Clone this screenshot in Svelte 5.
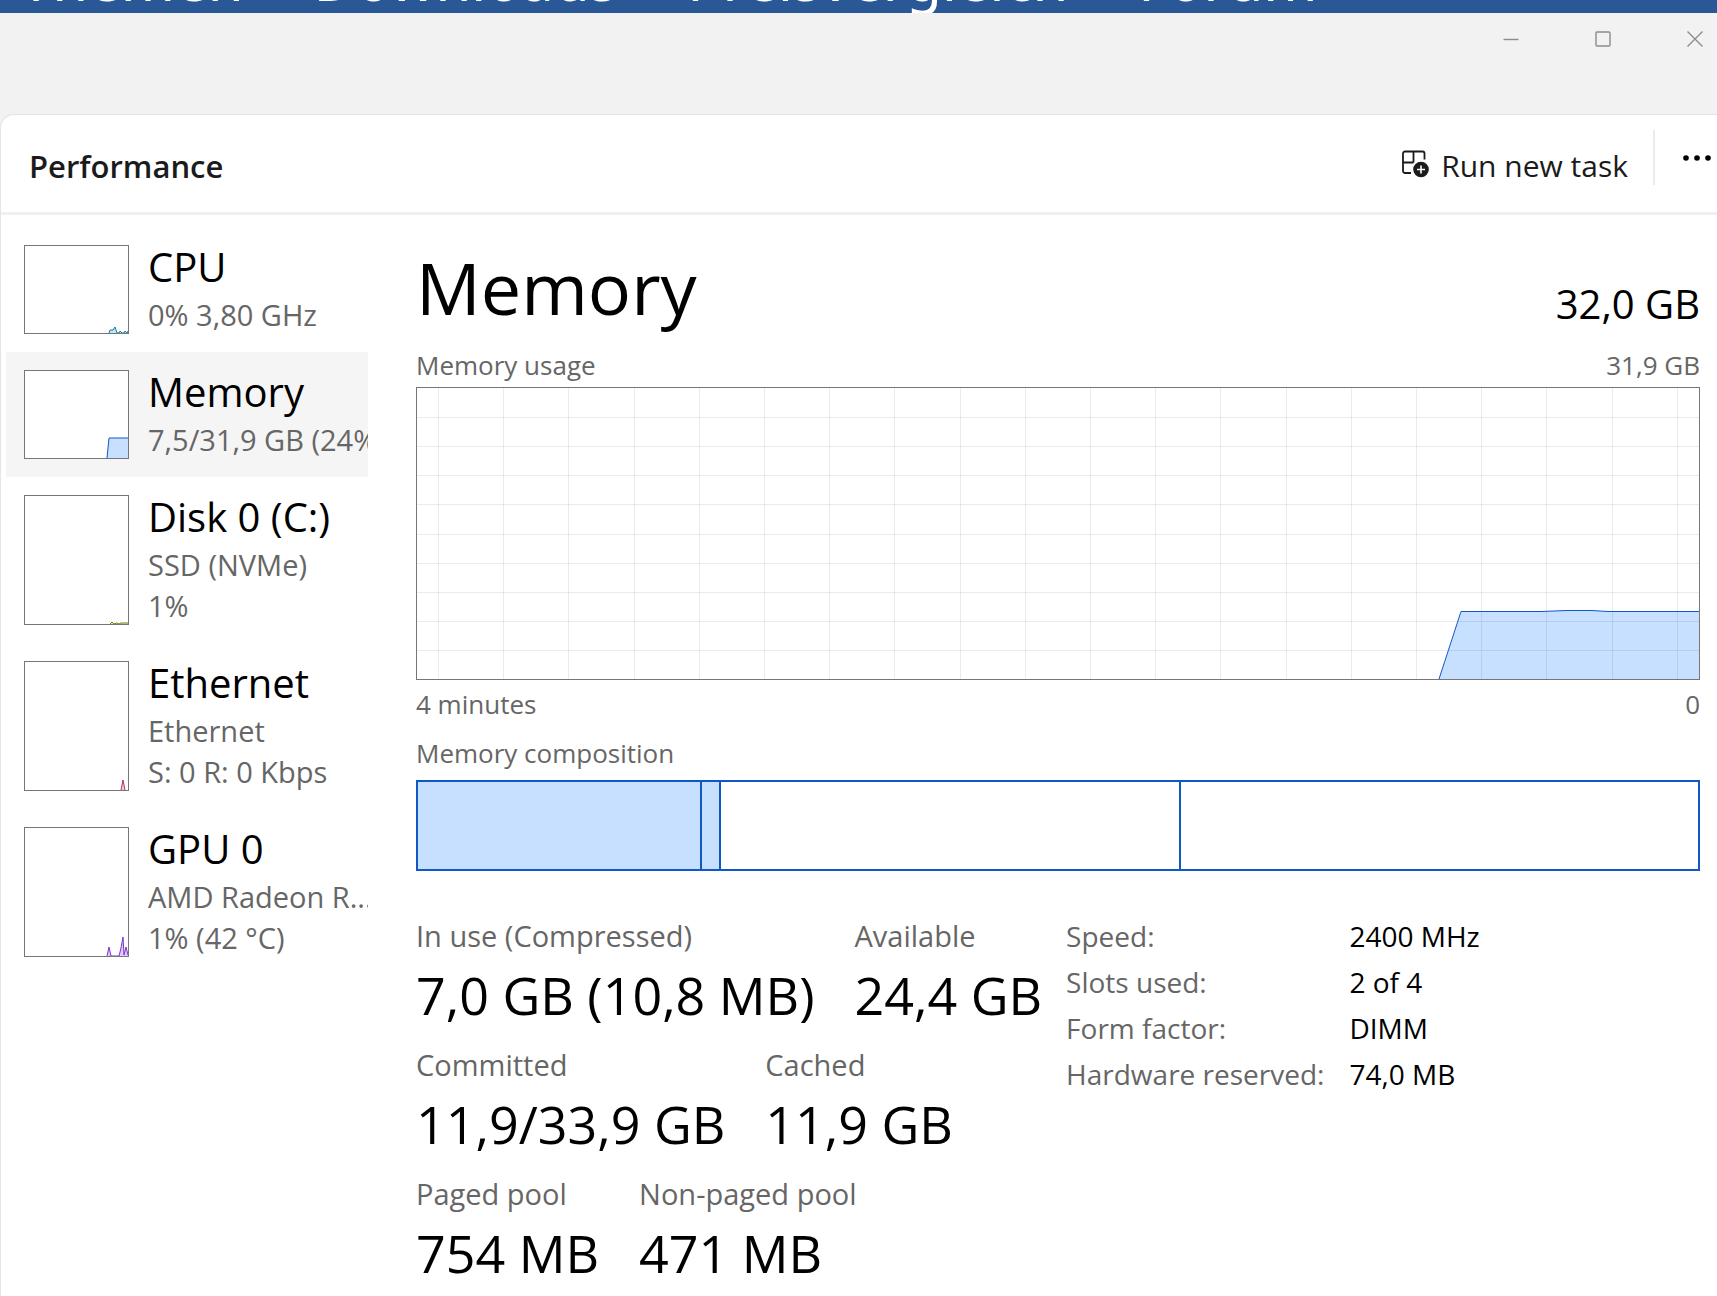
<script lang="ts">
  // Task Manager, Performance tab with the memory page open

  interface Device {
    id: string;
    name: string;
    lines: string[];
    color: string;
    fill: string;
    // graph points, measured from the bottom right corner of the thumbnail
    points: [number, number][];
  }

  const siteLinks = ['Themen', 'Downloads', 'Preisvergleich', 'Forum'];

  const devices: Device[] = [
    {
      id: 'cpu',
      name: 'CPU',
      lines: ['0% 3,80 GHz'],
      color: '#117d9b',
      fill: '#c3e7f1',
      points: [[19, 0], [18, 3], [15, 3], [13, 6], [12, 3], [11, 0], [9, 0], [8, 2], [6, 0], [4, 0], [3, 2], [1, 0], [0, 2]],
    },
    {
      id: 'memory',
      name: 'Memory',
      lines: ['7,5/31,9 GB (24%)'],
      color: '#1158c7',
      fill: '#c7e0ff',
      points: [[21, 0], [19, 20], [0, 20]],
    },
    {
      id: 'disk',
      name: 'Disk 0 (C:)',
      lines: ['SSD (NVMe)', '1%'],
      color: '#77801a',
      fill: '#e3e6bd',
      points: [[18, 0], [16, 2], [14, 0], [11, 1], [9, 0], [7, 1], [0, 1]],
    },
    {
      id: 'ethernet',
      name: 'Ethernet',
      lines: ['Ethernet', 'S: 0 R: 0 Kbps'],
      color: '#b5335c',
      fill: '#f2c9d6',
      points: [[7, 0], [5, 10], [3, 0]],
    },
    {
      id: 'gpu',
      name: 'GPU 0',
      lines: ['AMD Radeon R...', '1% (42 °C)'],
      color: '#7a35c9',
      fill: '#e2cdfa',
      points: [[21, 0], [19, 9], [17, 0], [9, 0], [7, 8], [5, 19], [4, 1], [2, 9], [0, 1]],
    },
  ];

  const stats = [
    [
      { label: 'In use (Compressed)', value: '7,0 GB (10,8 MB)' },
      { label: 'Available', value: '24,4 GB' },
    ],
    [
      { label: 'Committed', value: '11,9/33,9 GB' },
      { label: 'Cached', value: '11,9 GB' },
    ],
    [
      { label: 'Paged pool', value: '754 MB' },
      { label: 'Non-paged pool', value: '471 MB' },
    ],
  ];

  const details = [
    { label: 'Speed:', value: '2400 MHz' },
    { label: 'Slots used:', value: '2 of 4' },
    { label: 'Form factor:', value: 'DIMM' },
    { label: 'Hardware reserved:', value: '74,0 MB' },
  ];

  // share of installed memory, in percent
  const composition = [
    { name: 'In use', share: 22.2, used: true },
    { name: 'Modified', share: 1.5, used: true },
    { name: 'Standby', share: 35.9, used: false },
    { name: 'Free', share: 40.4, used: false },
  ];

  const gridX = Array.from({ length: 20 }, (_, i) => Math.round(22 + i * 65.2));
  const gridY = Array.from({ length: 9 }, (_, i) => Math.round((i + 1) * 29.1));

  let selected = $state('memory');

  function toPoints(device: Device): string {
    return device.points.map(([x, y]) => `${103 - x},${100 - y}`).join(' ');
  }
</script>

<div class="screen">
  <nav class="site-nav">
    {#each siteLinks as link}
      <a href="#{link.toLowerCase()}">{link}</a>
    {/each}
  </nav>

  <div class="window">
    <div class="title-bar">
      <button aria-label="Minimize">
        <svg width="16" height="16" viewBox="0 0 16 16"><path d="M0.5 8.5H15.5" /></svg>
      </button>
      <button aria-label="Maximize">
        <svg width="16" height="16" viewBox="0 0 16 16"><rect x="1" y="1" width="14" height="14" rx="1" /></svg>
      </button>
      <button aria-label="Close">
        <svg width="16" height="16" viewBox="0 0 16 16"><path d="M0.5 0.5L15.5 15.5M15.5 0.5L0.5 15.5" /></svg>
      </button>
    </div>

    <div class="card">
      <header>
        <h1>Performance</h1>
        <button class="run-task">
          <svg width="28" height="28" viewBox="0 0 28 28">
            <g fill="none" stroke="#1b1b1b" stroke-width="1.800">
              <path d="M10 23H4a2 2 0 0 1-2-2V3.500a2 2 0 0 1 2-2H21.500a2 2 0 0 1 2 2V9.500" />
              <path d="M12.500 1.500V12.500M2 12.500H12.500" />
            </g>
            <circle cx="20" cy="19.500" r="7.800" fill="#1b1b1b" />
            <path d="M20 15.500V23.500M16 19.500H24" stroke="#fff" stroke-width="1.600" />
          </svg>
          Run new task
        </button>
        <span class="divider"></span>
        <button class="more" aria-label="More">
          <svg width="28" height="6" viewBox="0 0 28 6">
            <circle cx="3" cy="3" r="2.800" />
            <circle cx="14" cy="3" r="2.800" />
            <circle cx="25" cy="3" r="2.800" />
          </svg>
        </button>
      </header>

      <div class="body">
        <aside>
          {#each devices as device (device.id)}
            <button
              class="device"
              class:selected={device.id === selected}
              onclick={() => (selected = device.id)}
            >
              <span class="thumb">
                <svg width="103" height="100" viewBox="0 0 103 100">
                  <polygon points="{toPoints(device)} 103,100" fill={device.fill} />
                  <polyline points={toPoints(device)} fill="none" stroke={device.color} />
                </svg>
              </span>
              <span class="device-text">
                <span class="device-name">{device.name}</span>
                {#each device.lines as line}
                  <span class="device-line">{line}</span>
                {/each}
              </span>
            </button>
          {/each}
        </aside>

        <main>
          <div class="heading">
            <h2>Memory</h2>
            <span class="capacity">32,0 GB</span>
          </div>

          <div class="caption usage"><span>Memory usage</span><span>31,9 GB</span></div>
          <div class="chart">
            <svg viewBox="0 0 1282 291" preserveAspectRatio="none">
              <polygon points="1022,291 1044,223.500 1124,223.500 1150,222.500 1175,222.500 1191,223.500 1282,223.500 1282,291" fill="#c7e0ff" />
              <g class="grid">
                {#each gridX as x}
                  <line x1={x - 0.5} y1="0" x2={x - 0.5} y2="291" />
                {/each}
                {#each gridY as y}
                  <line x1="0" y1={y + 0.5} x2="1282" y2={y + 0.5} />
                {/each}
              </g>
              <polyline class="trace" points="1022,291 1044,223.500 1124,223.500 1150,222.500 1175,222.500 1191,223.500 1282,223.500" />
            </svg>
          </div>
          <div class="caption axis"><span>4 minutes</span><span>0</span></div>

          <div class="caption comp-label"><span>Memory composition</span></div>
          <div class="composition">
            {#each composition as part}
              <div class:used={part.used} style="width: {part.share}%" title={part.name}></div>
            {/each}
          </div>

          <div class="figures">
            <div class="stats">
              {#each stats as row}
                <dl class="stat-row">
                  {#each row as stat}
                    <div>
                      <dt>{stat.label}</dt>
                      <dd>{stat.value}</dd>
                    </div>
                  {/each}
                </dl>
              {/each}
            </div>

            <dl class="details">
              {#each details as detail}
                <dt>{detail.label}</dt>
                <dd>{detail.value}</dd>
              {/each}
            </dl>
          </div>
        </main>
      </div>
    </div>
  </div>
</div>

<style>
  :global(body) {
    margin: 0;
  }

  .screen {
    display: flex;
    flex-direction: column;
    min-height: 100vh;
    overflow: hidden;
    background: #f2f2f2;
    font-family: 'Open Sans', 'Noto Sans', sans-serif;
    color: #000;
  }

  button {
    border: none;
    padding: 0;
    background: transparent;
    font: inherit;
    color: inherit;
    cursor: pointer;
  }

  h1, h2, dl, dd {
    margin: 0;
  }

  /* lower edge of the page behind the window */
  .site-nav {
    display: flex;
    align-items: flex-end;
    gap: 70px;
    height: 13px;
    padding-left: 20px;
    overflow: hidden;
    background: #2a5796;
    box-sizing: border-box;
  }

  .site-nav a {
    font-family: 'Noto Sans', sans-serif;
    font-size: 58px;
    line-height: 68px;
    color: #fff;
    text-decoration: none;
  }

  .window {
    flex: 1;
    display: flex;
    flex-direction: column;
  }

  .title-bar {
    display: flex;
    justify-content: flex-end;
    align-items: flex-start;
    gap: 48px;
    height: 101px;
  }

  .title-bar button {
    display: flex;
    align-items: center;
    justify-content: center;
    width: 44px;
    height: 52px;
  }

  .title-bar svg {
    fill: none;
    stroke: #8c8c8c;
    stroke-width: 1.4;
  }

  .card {
    flex: 1;
    background: #fff;
    border-top: 1px solid #e2e2e2;
    border-left: 1px solid #e5e5e5;
    border-top-left-radius: 14px;
  }

  header {
    display: flex;
    align-items: center;
    height: 97px;
    padding-left: 28px;
    border-bottom: 3px solid #f0f0f0;
    color: #1b1b1b;
  }

  h1 {
    flex: 1;
    font-size: 31px;
    line-height: 40px;
    font-weight: 600;
    padding-top: 4px;
  }

  .run-task {
    display: flex;
    align-items: center;
    gap: 12px;
    padding-top: 4px;
    font-size: 30px;
    line-height: 40px;
  }

  .run-task svg {
    margin-bottom: 4px;
  }

  .divider {
    width: 2px;
    height: 55px;
    margin: 0 28px 12px 25px;
    background: #ebebeb;
  }

  .more {
    display: flex;
    align-items: center;
    height: 40px;
    margin: 0 6px 12px 0;
  }

  .body {
    display: flex;
  }

  aside {
    display: flex;
    flex-direction: column;
    width: 362px;
    flex: none;
    padding: 12px 0 0 5px;
  }

  .device {
    display: flex;
    gap: 19px;
    padding: 18px 0 17px 18px;
    text-align: left;
    overflow: hidden;
  }

  .device.selected {
    background: #f5f5f5;
  }

  .thumb {
    display: flex;
    align-items: flex-end;
    flex: none;
    width: 103px;
    margin-bottom: 1px;
    overflow: hidden;
    border: 1px solid #767676;
    background: #fff;
  }

  .thumb svg {
    display: block;
    margin-top: -100px;
  }

  .device-text {
    display: flex;
    flex-direction: column;
    white-space: nowrap;
  }

  .device-name {
    font-size: 40px;
    line-height: 44px;
    margin-bottom: 5px;
  }

  .device-line {
    font-size: 29px;
    line-height: 41px;
    color: #666;
  }

  main {
    flex: 1;
    min-width: 0;
    padding: 32px 17px 0 48px;
  }

  .heading {
    display: flex;
    align-items: flex-end;
    justify-content: space-between;
  }

  h2 {
    font-size: 72px;
    line-height: 80px;
    font-weight: 400;
  }

  .capacity {
    font-size: 40px;
    line-height: 46px;
  }

  .caption {
    display: flex;
    justify-content: space-between;
    font-size: 26px;
    line-height: 32px;
    color: #666;
  }

  .usage {
    margin: 22px 0 6px;
  }

  .chart {
    border: 1px solid #767676;
  }

  .chart svg {
    display: block;
    width: 100%;
    height: 291px;
  }

  .grid line {
    stroke: #000;
    stroke-opacity: 0.08;
    vector-effect: non-scaling-stroke;
  }

  .trace {
    fill: none;
    stroke: #1158c7;
    vector-effect: non-scaling-stroke;
  }

  .axis {
    margin-top: 8px;
  }

  .comp-label {
    margin: 17px 0 11px;
  }

  .composition {
    display: flex;
    height: 87px;
    border: 2px solid #1158c7;
  }

  .composition div {
    box-sizing: border-box;
    border-right: 2px solid #1158c7;
  }

  .composition div:last-child {
    border-right: none;
  }

  .composition .used {
    background: #c7e0ff;
  }

  .figures {
    display: flex;
    gap: 24px;
    margin-top: 47px;
    white-space: nowrap;
  }

  .stats {
    display: flex;
    flex-direction: column;
    gap: 20px;
  }

  .stat-row {
    display: flex;
    gap: 40px;
  }

  dt {
    font-size: 28px;
    line-height: 36px;
    color: #666;
  }

  .stat-row dt {
    font-size: 29px;
  }

  .stat-row dd {
    margin-top: 9px;
    font-size: 52px;
    line-height: 64px;
  }

  .details {
    display: grid;
    grid-template-columns: max-content max-content;
    align-content: start;
    gap: 10px 25px;
  }

  .details dd {
    font-size: 28px;
    line-height: 36px;
  }
</style>
